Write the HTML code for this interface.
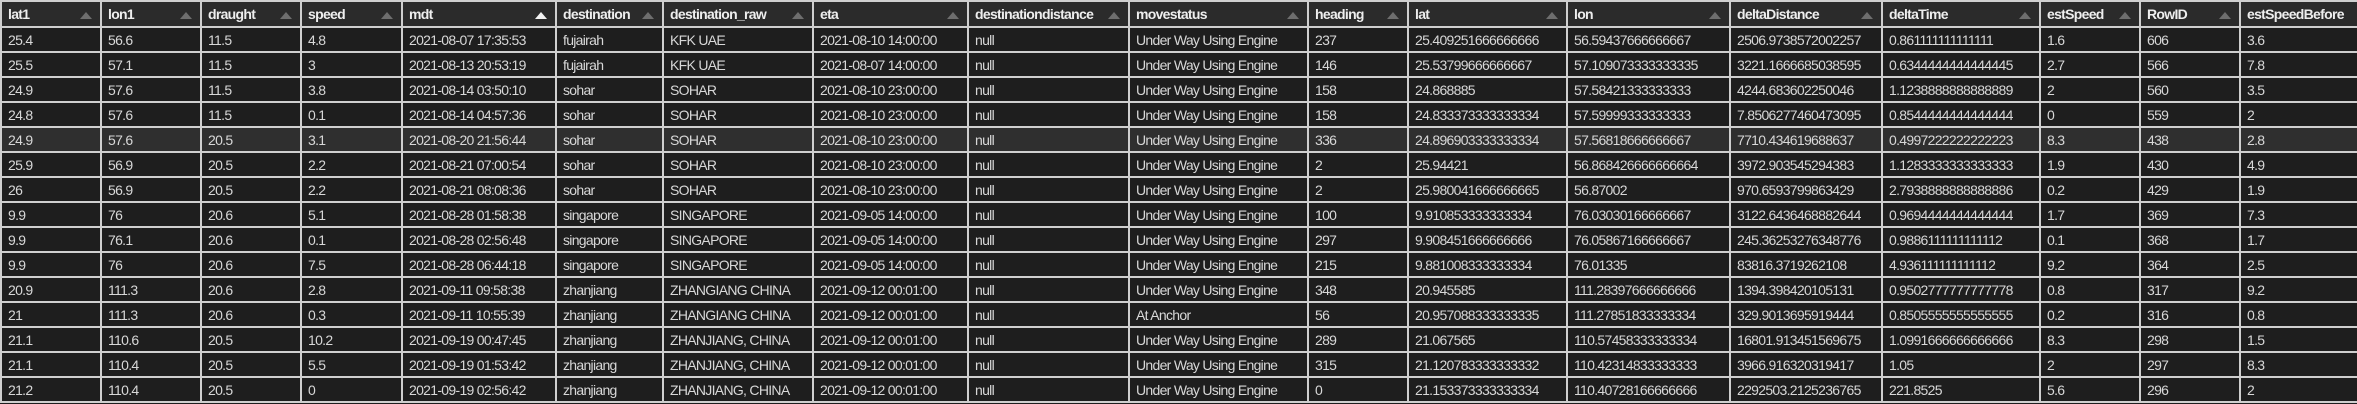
<!DOCTYPE html>
<html><head><meta charset="utf-8"><style>
html,body{margin:0;padding:0;background:#1e1e1e;width:2357px;height:404px;overflow:hidden}
table{border-collapse:collapse;table-layout:fixed;width:2357px;font-family:"Liberation Sans",Arial,sans-serif;font-size:14px;letter-spacing:-0.7px;color:#d8d8d8}
tr{height:25px}
tr.hd{height:26px}
td,th{border:2px solid #cfcfcf;padding:0 0 0 6px;white-space:nowrap;overflow:hidden;text-align:left;background:#1e1e1e;line-height:20px}
th{background:#2b2b2b;color:#eee;font-weight:bold;position:relative}
th i{position:absolute;right:8px;top:10px;width:0;height:0;border-left:6px solid transparent;border-right:6px solid transparent;border-bottom:7px solid #6e6e6e}
th i.w{border-bottom-color:#f2f2f2}
tr.h td{background:#2f2f2f}
</style></head><body>
<table>
<colgroup><col style="width:100px"><col style="width:100px"><col style="width:100px"><col style="width:101px"><col style="width:154px"><col style="width:107px"><col style="width:150px"><col style="width:155px"><col style="width:161px"><col style="width:179px"><col style="width:100px"><col style="width:159px"><col style="width:163px"><col style="width:152px"><col style="width:158px"><col style="width:100px"><col style="width:100px"><col style="width:118px"></colgroup>
<tr class="hd"><th>lat1<i></i></th><th>lon1<i></i></th><th>draught<i></i></th><th>speed<i></i></th><th>mdt<i class="w"></i></th><th>destination<i></i></th><th>destination_raw<i></i></th><th>eta<i></i></th><th>destinationdistance<i></i></th><th>movestatus<i></i></th><th>heading<i></i></th><th>lat<i></i></th><th>lon<i></i></th><th>deltaDistance<i></i></th><th>deltaTime<i></i></th><th>estSpeed<i></i></th><th>RowID<i></i></th><th>estSpeedBefore</th></tr>
<tr><td>25.4</td><td>56.6</td><td>11.5</td><td>4.8</td><td>2021-08-07 17:35:53</td><td>fujairah</td><td>KFK UAE</td><td>2021-08-10 14:00:00</td><td>null</td><td>Under Way Using Engine</td><td>237</td><td>25.409251666666666</td><td>56.59437666666667</td><td>2506.9738572002257</td><td>0.861111111111111</td><td>1.6</td><td>606</td><td>3.6</td></tr>
<tr><td>25.5</td><td>57.1</td><td>11.5</td><td>3</td><td>2021-08-13 20:53:19</td><td>fujairah</td><td>KFK UAE</td><td>2021-08-07 14:00:00</td><td>null</td><td>Under Way Using Engine</td><td>146</td><td>25.53799666666667</td><td>57.109073333333335</td><td>3221.1666685038595</td><td>0.6344444444444445</td><td>2.7</td><td>566</td><td>7.8</td></tr>
<tr><td>24.9</td><td>57.6</td><td>11.5</td><td>3.8</td><td>2021-08-14 03:50:10</td><td>sohar</td><td>SOHAR</td><td>2021-08-10 23:00:00</td><td>null</td><td>Under Way Using Engine</td><td>158</td><td>24.868885</td><td>57.58421333333333</td><td>4244.683602250046</td><td>1.1238888888888889</td><td>2</td><td>560</td><td>3.5</td></tr>
<tr><td>24.8</td><td>57.6</td><td>11.5</td><td>0.1</td><td>2021-08-14 04:57:36</td><td>sohar</td><td>SOHAR</td><td>2021-08-10 23:00:00</td><td>null</td><td>Under Way Using Engine</td><td>158</td><td>24.833373333333334</td><td>57.59999333333333</td><td>7.8506277460473095</td><td>0.8544444444444444</td><td>0</td><td>559</td><td>2</td></tr>
<tr class="h"><td>24.9</td><td>57.6</td><td>20.5</td><td>3.1</td><td>2021-08-20 21:56:44</td><td>sohar</td><td>SOHAR</td><td>2021-08-10 23:00:00</td><td>null</td><td>Under Way Using Engine</td><td>336</td><td>24.896903333333334</td><td>57.56818666666667</td><td>7710.434619688637</td><td>0.4997222222222223</td><td>8.3</td><td>438</td><td>2.8</td></tr>
<tr><td>25.9</td><td>56.9</td><td>20.5</td><td>2.2</td><td>2021-08-21 07:00:54</td><td>sohar</td><td>SOHAR</td><td>2021-08-10 23:00:00</td><td>null</td><td>Under Way Using Engine</td><td>2</td><td>25.94421</td><td>56.868426666666664</td><td>3972.903545294383</td><td>1.1283333333333333</td><td>1.9</td><td>430</td><td>4.9</td></tr>
<tr><td>26</td><td>56.9</td><td>20.5</td><td>2.2</td><td>2021-08-21 08:08:36</td><td>sohar</td><td>SOHAR</td><td>2021-08-10 23:00:00</td><td>null</td><td>Under Way Using Engine</td><td>2</td><td>25.980041666666665</td><td>56.87002</td><td>970.6593799863429</td><td>2.7938888888888886</td><td>0.2</td><td>429</td><td>1.9</td></tr>
<tr><td>9.9</td><td>76</td><td>20.6</td><td>5.1</td><td>2021-08-28 01:58:38</td><td>singapore</td><td>SINGAPORE</td><td>2021-09-05 14:00:00</td><td>null</td><td>Under Way Using Engine</td><td>100</td><td>9.910853333333334</td><td>76.03030166666667</td><td>3122.6436468882644</td><td>0.9694444444444444</td><td>1.7</td><td>369</td><td>7.3</td></tr>
<tr><td>9.9</td><td>76.1</td><td>20.6</td><td>0.1</td><td>2021-08-28 02:56:48</td><td>singapore</td><td>SINGAPORE</td><td>2021-09-05 14:00:00</td><td>null</td><td>Under Way Using Engine</td><td>297</td><td>9.908451666666666</td><td>76.05867166666667</td><td>245.36253276348776</td><td>0.9886111111111112</td><td>0.1</td><td>368</td><td>1.7</td></tr>
<tr><td>9.9</td><td>76</td><td>20.6</td><td>7.5</td><td>2021-08-28 06:44:18</td><td>singapore</td><td>SINGAPORE</td><td>2021-09-05 14:00:00</td><td>null</td><td>Under Way Using Engine</td><td>215</td><td>9.881008333333334</td><td>76.01335</td><td>83816.3719262108</td><td>4.936111111111112</td><td>9.2</td><td>364</td><td>2.5</td></tr>
<tr><td>20.9</td><td>111.3</td><td>20.6</td><td>2.8</td><td>2021-09-11 09:58:38</td><td>zhanjiang</td><td>ZHANGIANG CHINA</td><td>2021-09-12 00:01:00</td><td>null</td><td>Under Way Using Engine</td><td>348</td><td>20.945585</td><td>111.28397666666666</td><td>1394.398420105131</td><td>0.9502777777777778</td><td>0.8</td><td>317</td><td>9.2</td></tr>
<tr><td>21</td><td>111.3</td><td>20.6</td><td>0.3</td><td>2021-09-11 10:55:39</td><td>zhanjiang</td><td>ZHANGIANG CHINA</td><td>2021-09-12 00:01:00</td><td>null</td><td>At Anchor</td><td>56</td><td>20.957088333333335</td><td>111.27851833333334</td><td>329.9013695919444</td><td>0.8505555555555555</td><td>0.2</td><td>316</td><td>0.8</td></tr>
<tr><td>21.1</td><td>110.6</td><td>20.5</td><td>10.2</td><td>2021-09-19 00:47:45</td><td>zhanjiang</td><td>ZHANJIANG, CHINA</td><td>2021-09-12 00:01:00</td><td>null</td><td>Under Way Using Engine</td><td>289</td><td>21.067565</td><td>110.57458333333334</td><td>16801.913451569675</td><td>1.0991666666666666</td><td>8.3</td><td>298</td><td>1.5</td></tr>
<tr><td>21.1</td><td>110.4</td><td>20.5</td><td>5.5</td><td>2021-09-19 01:53:42</td><td>zhanjiang</td><td>ZHANJIANG, CHINA</td><td>2021-09-12 00:01:00</td><td>null</td><td>Under Way Using Engine</td><td>315</td><td>21.120783333333332</td><td>110.42314833333333</td><td>3966.916320319417</td><td>1.05</td><td>2</td><td>297</td><td>8.3</td></tr>
<tr><td>21.2</td><td>110.4</td><td>20.5</td><td>0</td><td>2021-09-19 02:56:42</td><td>zhanjiang</td><td>ZHANJIANG, CHINA</td><td>2021-09-12 00:01:00</td><td>null</td><td>Under Way Using Engine</td><td>0</td><td>21.153373333333334</td><td>110.40728166666666</td><td>2292503.2125236765</td><td>221.8525</td><td>5.6</td><td>296</td><td>2</td></tr>
</table>
</body></html>
